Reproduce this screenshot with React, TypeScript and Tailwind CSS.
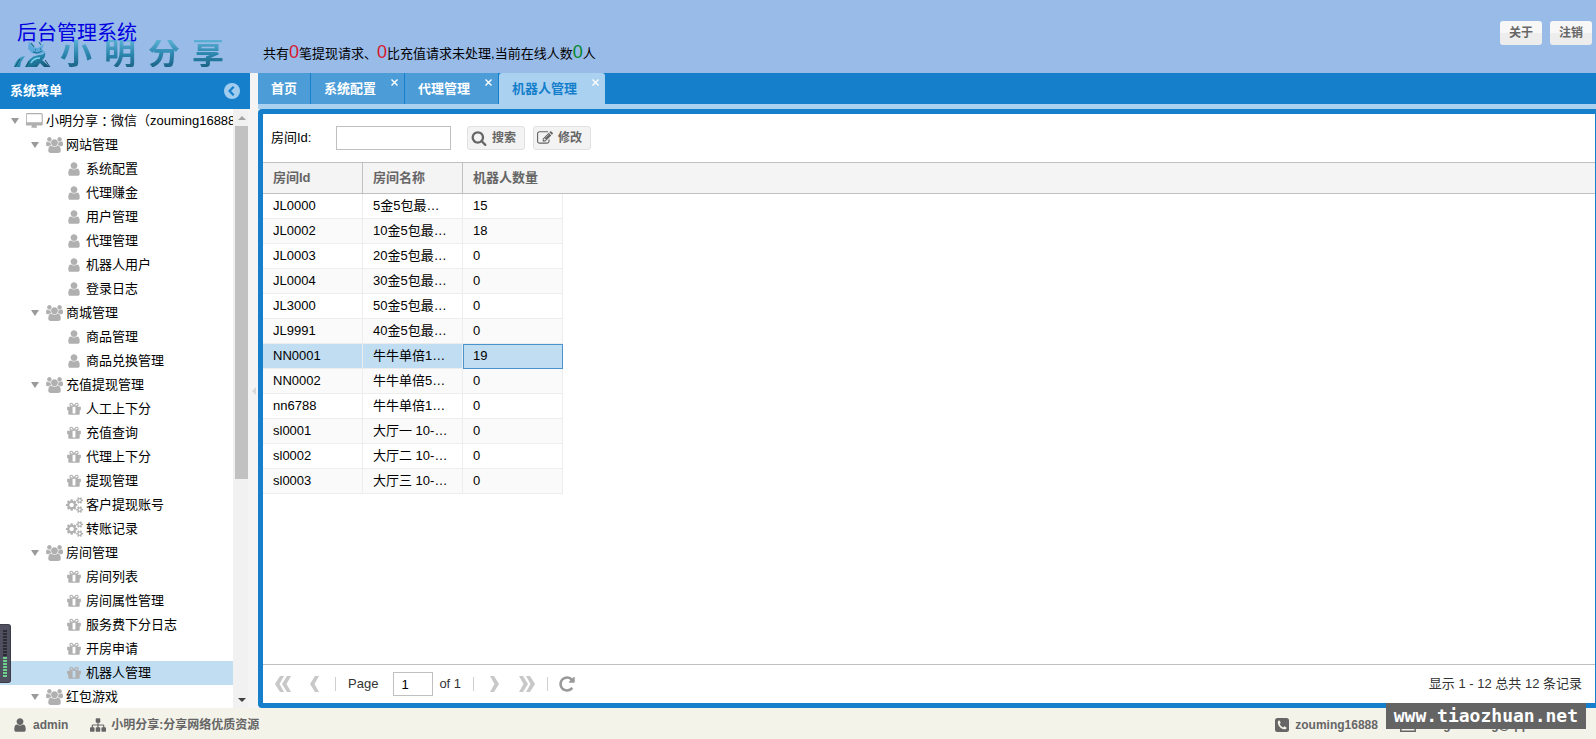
import React from 'react';

const ICONS = {
  desktop: {
    box: '0 0 1856 1792',
    d: 'M1728 992v-832q0-13-9.5-22.5t-22.5-9.5h-1600q-13 0-22.5 9.5t-9.5 22.5v832q0 13 9.5 22.5t22.5 9.5h1600q13 0 22.5-9.5t9.5-22.5zm128-832v1088q0 66-47 113t-113 47h-544q0 37 16 77.5t32 71 16 43.5q0 26-19 45t-45 19h-512q-26 0-45-19t-19-45q0-14 16-44t32-70 16-78h-544q-66 0-113-47t-47-113v-1088q0-66 47-113t113-47h1600q66 0 113 47t47 113z',
  },
  users: {
    box: '0 0 1920 1792',
    d: 'M593 896q-162 5-265 128h-134q-82 0-138-40.5t-56-118.5q0-353 124-353 6 0 43.500 21t97.500 42.500 119 21.500q67 0 133-23-5 37-5 66 0 159 81 256zm1071 637q0 120-73 189.500t-194 69.500h-874q-121 0-194-69.500t-73-189.500q0-53 3.500-103.500t14-109 26.500-108.500 43-97.500 62-81 85.500-53.500 111.500-20q10 0 43 21.500t73 48 107 48 135 21.500 135-21.500 107-48 73-48 43-21.500q61 0 111.500 20t85.500 53.500 62 81 43 97.500 26.500 108.500 14 109 3.500 103.500zm-1024-1277q0 106-75 181t-181 75-181-75-75-181 75-181 181-75 181 75 75 181zm704 384q0 159-112.500 271.500t-271.500 112.500-271.500-112.500-112.500-271.500 112.500-271.500 271.500-112.500 271.500 112.500 112.500 271.500zm576 225q0 78-56 118.500t-138 40.500h-134q-103-123-265-128 90-135 90-294 0-29-5-66 66 23 133 23 59 0 119-21.500t97.500-42.500 43.500-21q124 0 124 353zm-128-609q0 106-75 181t-181 75-181-75-75-181 75-181 181-75 181 75 75 181z',
  },
  user: {
    box: '0 0 1792 1792',
    d: 'M1536 1399q0 109-62.5 187t-150.5 78h-854q-88 0-150.5-78t-62.5-187q0-85 8.5-160.5t31.5-152 58.5-131 94-89 134.5-34.5q131 128 313 128t313-128q76 0 134.5 34.5t94 89 58.5 131 31.5 152 8.5 160.5zm-256-887q0 159-112.5 271.5t-271.5 112.5-271.5-112.5-112.5-271.5 112.5-271.5 271.5-112.5 271.5 112.5 112.5 271.5z',
  },
  gift: {
    box: '0 0 1792 1792',
    d: 'M1056 1356v-716h-320v716q0 25 18 38.5t46 13.5h192q28 0 46-13.5t18-38.5zm-456-844h195l-126-161q-26-31-69-31-40 0-68 28t-28 68 28 68 68 28zm688-96q0-40-28-68t-68-28q-43 0-69 31l-125 161h194q40 0 68-28t28-68zm376 256v320q0 14-9 23t-23 9h-96v416q0 40-28 68t-68 28h-1088q-40 0-68-28t-28-68v-416h-96q-14 0-23-9t-9-23v-320q0-14 9-23t23-9h440q-93 0-158.5-65.5t-65.500-158.500 65.500-158.500 158.500-65.500q107 0 168 77l128 165 128-165q61-77 168-77 93 0 158.500 65.500t65.500 158.500-65.500 158.500-158.500 65.500h440q14 0 23 9t9 23z',
  },
  cogs: {
    box: '0 0 1920 1792',
    d: 'M896 896q0-106-75-181t-181-75-181 75-75 181 75 181 181 75 181-75 75-181zm768 512q0-52-38-90t-90-38-90 38-38 90q0 53 37.500 90.500t90.500 37.500 90.500-37.500 37.500-90.500zm0-1024q0-52-38-90t-90-38-90 38-38 90q0 53 37.500 90.500t90.500 37.500 90.500-37.500 37.500-90.500zm-384 421v185q0 10-7 19.500t-16 10.500l-155 24q-11 35-32 76 34 48 90 115 7 11 7 20 0 12-7 19-23 30-82.500 89.500t-78.500 59.500q-11 0-21-7l-115-90q-37 19-77 31-11 108-23 155-7 24-30 24h-186q-11 0-20-7.500t-10-17.500l-23-153q-34-10-75-31l-118 89q-7 7-20 7-11 0-21-8-144-133-144-160 0-9 7-19 10-14 41-53t47-61q-23-44-35-82l-152-24q-10-1-17-9.500t-7-19.500v-185q0-10 7-19.500t16-10.500l155-24q11-35 32-76-34-48-90-115-7-11-7-20 0-12 7-20 22-30 82-89t79-59q11 0 21 7l115 90q34-18 77-32 11-108 23-154 7-24 30-24h186q11 0 20 7.500t10 17.500l23 153q34 10 75 31l118-89q8-7 20-7 11 0 21 8 144 133 144 160 0 8-7 19-12 16-42 54t-45 60q23 48 34 82l152 23q10 2 17 10.500t7 19.500zm640 533v140q0 16-149 31-12 27-30 52 51 113 51 138 0 4-4 7-122 71-124 71-8 0-46-47t-52-68q-20 2-30 2t-30-2q-14 21-52 68t-46 47q-2 0-124-71-4-3-4-7 0-25 51-138-18-25-30-52-149-15-149-31v-140q0-16 149-31 13-29 30-52-51-113-51-138 0-4 4-7 4-2 35-20t59-34 30-16q8 0 46 46.500t52 67.500q20-2 30-2t30 2q51-71 92-112l6-2q4 0 124 70 4 3 4 7 0 25-51 138 17 23 30 52 149 15 149 31zm0-1024v140q0 16-149 31-12 27-30 52 51 113 51 138 0 4-4 7-122 71-124 71-8 0-46-47t-52-68q-20 2-30 2t-30-2q-14 21-52 68t-46 47q-2 0-124-71-4-3-4-7 0-25 51-138-18-25-30-52-149-15-149-31v-140q0-16 149-31 13-29 30-52-51-113-51-138 0-4 4-7 4-2 35-20t59-34 30-16q8 0 46 46.500t52 67.500q20-2 30-2t30 2q51-71 92-112l6-2q4 0 124 70 4 3 4 7 0 25-51 138 17 23 30 52 149 15 149 31z',
  },
  sitemap: {
    box: '0 0 1792 1792',
    d: 'M1792 1248v320q0 40-28 68t-68 28h-320q-40 0-68-28t-28-68v-320q0-40 28-68t68-28h96v-192h-512v192h96q40 0 68 28t28 68v320q0 40-28 68t-68 28h-320q-40 0-68-28t-28-68v-320q0-40 28-68t68-28h96v-192h-512v192h96q40 0 68 28t28 68v320q0 40-28 68t-68 28h-320q-40 0-68-28t-28-68v-320q0-40 28-68t68-28h96v-192q0-52 38-90t90-38h512v-192h-96q-40 0-68-28t-28-68v-320q0-40 28-68t68-28h320q40 0 68 28t28 68v320q0 40-28 68t-68 28h-96v192h512q52 0 90 38t38 90v192h96q40 0 68 28t28 68z',
  },
  search: {
    box: '0 0 1792 1792',
    d: 'M1216 832q0-185-131.5-316.5t-316.5-131.5-316.5 131.5-131.5 316.5 131.5 316.5 316.5 131.5 316.5-131.5 131.5-316.5zm512 832q0 52-38 90t-90 38q-54 0-90-38l-343-342q-179 124-399 124-143 0-273.5-55.5t-225-150-150-225-55.5-273.5 55.5-273.5 150-225 225-150 273.5-55.5 273.5 55.5 225 150 150 225 55.5 273.5q0 220-124 399l343 343q37 37 37 90z',
  },
  edit: {
    box: '0 0 1792 1792',
    d: 'M888 1184l116-116-152-152-116 116v56h96v96h56zm440-720q-16-16-33 1l-350 350q-17 17-1 33t33-1l350-350q17-17 1-33zm80 594v190q0 119-84.5 203.5t-203.5 84.5h-832q-119 0-203.5-84.5t-84.5-203.5v-832q0-119 84.5-203.5t203.5-84.5h832q63 0 117 25 15 7 18 23 3 17-9 29l-49 49q-14 14-32 8-23-6-45-6h-832q-66 0-113 47t-47 113v832q0 66 47 113t113 47h832q66 0 113-47t47-113v-126q0-13 9-22l64-64q15-15 35-7t20 29zm-96-738l288 288-672 672h-288v-288zm444 132l-92 92-288-288 92-92q28-28 68-28t68 28l152 152q28 28 28 68t-28 68z',
  },
  refresh: {
    box: '0 0 1792 1792',
    d: 'M1664 256v448q0 26-19 45t-45 19h-448q-42 0-59-40-17-39 14-69l138-138q-148-137-349-137-104 0-198.5 40.5t-163.5 109.5-109.5 163.5-40.5 198.5 40.5 198.5 109.5 163.5 163.5 109.5 198.5 40.5q119 0 225-52t179-147q7-10 23-12 15 0 25 9l137 138q9 8 9.5 20.5t-7.5 22.5q-109 132-264 204.5t-327 72.5q-156 0-298-61t-245-164-164-245-61-298 61-298 164-245 245-164 298-61q147 0 284.5 55.5t244.5 156.5l130-129q29-31 70-14 39 17 39 59z',
  },
} as const;

type IconName = keyof typeof ICONS;

function Icon({ name, className }: { name: IconName; className: string }) {
  return (
    <svg viewBox={ICONS[name].box} fill="currentColor" className={className} aria-hidden="true">
      <path d={ICONS[name].d} />
    </svg>
  );
}

type Group = { label: string; items: { icon: IconName; label: string }[] };

const items = (icon: IconName, ...labels: string[]) => labels.map((label) => ({ icon, label }));

const MENU: Group[] = [
  { label: '网站管理', items: items('user', '系统配置', '代理赚金', '用户管理', '代理管理', '机器人用户', '登录日志') },
  { label: '商城管理', items: items('user', '商品管理', '商品兑换管理') },
  {
    label: '充值提现管理',
    items: [
      ...items('gift', '人工上下分', '充值查询', '代理上下分', '提现管理'),
      ...items('cogs', '客户提现账号', '转账记录'),
    ],
  },
  { label: '房间管理', items: items('gift', '房间列表', '房间属性管理', '服务费下分日志', '开房申请', '机器人管理') },
  { label: '红包游戏', items: [] },
];

const SELECTED_ITEM = '机器人管理';

const ROWS: [string, string, number][] = [
  ['JL0000', '5金5包最…', 15],
  ['JL0002', '10金5包最…', 18],
  ['JL0003', '20金5包最…', 0],
  ['JL0004', '30金5包最…', 0],
  ['JL3000', '50金5包最…', 0],
  ['JL9991', '40金5包最…', 0],
  ['NN0001', '牛牛单倍1…', 19],
  ['NN0002', '牛牛单倍5…', 0],
  ['nn6788', '牛牛单倍1…', 0],
  ['sl0001', '大厅一 10-…', 0],
  ['sl0002', '大厅二 10-…', 0],
  ['sl0003', '大厅三 10-…', 0],
];

const SELECTED_ROW = 'NN0001';

function Arrow() {
  return (
    <span className="flex w-5 shrink-0 justify-center">
      <svg viewBox="0 0 8 6" className="h-[6px] w-2" aria-hidden="true">
        <path d="M0 0h8L4 6z" fill="#9a9a9a" />
      </svg>
    </span>
  );
}

const SIZES: Partial<Record<IconName, string>> = {
  desktop: 'h-4 w-[17px]',
  users: 'h-4 w-[17px]',
  cogs: 'h-4 w-[17px]',
};

function TreeIcon({ name }: { name: IconName }) {
  return (
    <span className="mr-[3px] flex w-[18px] shrink-0 justify-center text-[#b0b0b0]">
      <Icon name={name} className={SIZES[name] ?? 'h-4 w-4'} />
    </span>
  );
}

function Sidebar() {
  return (
    <aside className="flex w-[250px] shrink-0 flex-col">
      <div className="flex h-9 shrink-0 items-center justify-between bg-[#157fcc] px-[10px]">
        <h2 className="text-[13px] font-bold leading-5 text-white">系统菜单</h2>
        <button type="button" aria-label="收起菜单">
          <svg viewBox="0 0 16 16" className="block h-4 w-4" aria-hidden="true">
            <circle cx="8" cy="8" r="8" fill="#a1ccee" />
            <path d="M9.700 3.800L5.600 8l4.100 4.200" fill="none" stroke="#157fcc" strokeWidth="2.200" />
          </svg>
        </button>
      </div>
      <div className="flex min-h-0 grow bg-[#f4f4f4] pr-[2px]">
        <nav className="min-w-0 grow overflow-hidden whitespace-nowrap bg-white text-[13px] leading-6 text-black">
          <div className="flex h-6 items-center pl-[5px]">
            <Arrow />
            <TreeIcon name="desktop" />
            小明分享<span className="font-['Noto_Sans_CJK_TC',sans-serif]">：</span>微信（zouming16888
          </div>
          {MENU.map((group) => (
            <div key={group.label}>
              <div className="flex h-6 items-center pl-[25px]">
                <Arrow />
                <TreeIcon name="users" />
                {group.label}
              </div>
              {group.items.map((item) => (
                <a
                  key={item.label}
                  href="#"
                  className={
                    item.label === SELECTED_ITEM
                      ? 'flex h-6 items-center bg-[#c1ddf1] pl-[65px]'
                      : 'flex h-6 items-center pl-[65px]'
                  }
                >
                  <TreeIcon name={item.icon} />
                  {item.label}
                </a>
              ))}
            </div>
          ))}
        </nav>
        <div className="flex w-[15px] shrink-0 flex-col bg-[#f1f1f1] pl-[2px]">
          <span className="flex h-[17px] shrink-0 items-center justify-center">
            <svg viewBox="0 0 8 4" className="h-1 w-2" aria-hidden="true">
              <path d="M0 4h8L4 0z" fill="#a3a3a3" />
            </svg>
          </span>
          <div className="min-h-0 grow">
            <div className="h-[62.5%] bg-[#c1c1c1]" />
          </div>
          <span className="flex h-[17px] shrink-0 items-center justify-center">
            <svg viewBox="0 0 8 4" className="h-1 w-2" aria-hidden="true">
              <path d="M0 0h8L4 4z" fill="#404040" />
            </svg>
          </span>
        </div>
      </div>
    </aside>
  );
}

function Tabs() {
  return (
    <div className="flex h-[31px] shrink-0 bg-[#157fcc] text-[13px] font-bold" role="tablist">
      <button type="button" role="tab" className="mr-px bg-[#4b9cd7] px-[13px] text-white">
        首页
      </button>
      {['系统配置', '代理管理', '机器人管理'].map((label, i) => (
        <div
          key={label}
          className={
            i === 2
              ? 'flex rounded-t-[3px] bg-[#abd1f0] pl-[13px] text-[#157fcc]'
              : 'mr-px flex bg-[#4b9cd7] pl-[13px] text-white'
          }
        >
          <button type="button" role="tab" aria-selected={i === 2}>
            {label}
          </button>
          <button type="button" aria-label={`关闭${label}`} className="flex w-7 justify-end pr-[6px] pt-[6px]">
            <svg viewBox="0 0 7 7" className="h-[7px] w-[7px]" aria-hidden="true">
              <path d="M.5.5l6 6M6.500.5l-6 6" stroke="#fff" strokeWidth="1.400" />
            </svg>
          </button>
        </div>
      ))}
    </div>
  );
}

function ToolButton({ icon, children }: { icon: IconName; children: React.ReactNode }) {
  return (
    <button
      type="button"
      className="flex h-6 items-center gap-[5px] rounded-[3px] border border-[#e1e1e1] bg-[#f3f3f3] pl-[3px] pr-2 text-xs font-bold text-[#666]"
    >
      <Icon name={icon} className="h-4 w-4" />
      {children}
    </button>
  );
}

function Grid() {
  const cell = 'h-[25px] overflow-hidden text-ellipsis whitespace-nowrap border-b border-r border-[#ededed] px-[10px]';
  return (
    <table className="w-full table-fixed border-separate border-spacing-0 text-left text-[13px] leading-6">
      <colgroup>
        <col className="w-[100px]" />
        <col className="w-[100px]" />
        <col className="w-[100px]" />
        <col />
      </colgroup>
      <thead>
        <tr className="bg-[#f4f4f4] text-[#666]">
          <th className="h-8 border-b border-r border-t border-[#c0c0c0] px-[10px]">房间Id</th>
          <th className="h-8 border-b border-r border-t border-[#c0c0c0] px-[10px]">房间名称</th>
          <th className="h-8 border-b border-t border-[#c0c0c0] px-[10px]">机器人数量</th>
          <td className="h-8 border-b border-t border-[#c0c0c0]" />
        </tr>
      </thead>
      <tbody>
        {ROWS.map(([id, name, count], i) => {
          const selected = id === SELECTED_ROW;
          const bg = selected ? 'bg-[#c1ddf1]' : i % 2 ? 'bg-[#fafafa]' : 'bg-white';
          return (
            <tr key={id}>
              <td className={`${cell} ${bg}`}>{id}</td>
              <td className={`${cell} ${bg}`}>{name}</td>
              <td className={`${cell} ${bg} ${selected ? 'outline outline-1 -outline-offset-1 outline-[#4b93cc]' : ''}`}>
                {count}
              </td>
              <td />
            </tr>
          );
        })}
      </tbody>
    </table>
  );
}

function Chevrons({ double, flip, label }: { double?: boolean; flip?: boolean; label: string }) {
  return (
    <button type="button" aria-label={label}>
      <svg
        viewBox={double ? '0 0 16 16' : '0 0 9 16'}
        className={`${double ? 'h-4 w-4' : 'h-4 w-[9px]'} ${flip ? 'rotate-180' : ''}`}
        aria-hidden="true"
      >
        <path d="M5 0h4L4.500 8 9 16H5L0 8z" fill="#c8c8c8" />
        {double && <path d="M12 0h4l-4.500 8 4.500 8h-4L7 8z" fill="#c8c8c8" />}
      </svg>
    </button>
  );
}

function Pager() {
  const sep = 'h-[14px] w-px bg-[#d0d0d0]';
  return (
    <div className="flex h-[39px] shrink-0 items-center border-t border-[#c0c0c0] pl-3 pr-[13px] text-[13px] text-[#333]">
      <div className="flex items-center gap-[19px]">
        <Chevrons double label="第一页" />
        <Chevrons label="上一页" />
      </div>
      <div className={`${sep} ml-4 mr-3`} />
      <label className="flex items-center gap-[15px]">
        Page
        <input
          type="text"
          defaultValue="1"
          className="h-6 w-10 border border-[#c0c0c0] bg-white px-[7px] text-[13px] text-black"
        />
      </label>
      <span className="ml-[6px]">of 1</span>
      <div className={`${sep} mx-3`} />
      <div className="flex items-center gap-5 pl-1">
        <Chevrons flip label="下一页" />
        <Chevrons double flip label="最后一页" />
      </div>
      <div className={`${sep} ml-3 mr-[10px]`} />
      <button type="button" aria-label="刷新" className="text-[#999]">
        <Icon name="refresh" className="h-[18px] w-[18px]" />
      </button>
      <span className="ml-auto">显示 1 - 12 总共 12 条记录</span>
    </div>
  );
}

function Header() {
  const button =
    'h-6 rounded-[3px] bg-linear-to-b from-[#f7f7f7] from-50% to-[#ededed] to-50% px-[9px] text-xs font-bold text-[#666]';
  return (
    <header className="flex h-[73px] shrink-0 bg-[#99bbe8]">
      <div className="relative w-[263px] shrink-0 pl-[17px] pt-[19px]">
        <a href="#" className="relative z-10 block text-xl leading-7 text-[#0000e0]">
          后台管理系统
        </a>
        <div className="absolute left-3 top-[40px] flex h-[27px] items-start">
          <svg viewBox="0 0 40 27" className="h-[27px] w-10 shrink-0" aria-hidden="true">
            <defs>
              <linearGradient id="steel" x1="0" y1="0" x2="1" y2="1">
                <stop offset="0" stopColor="#5fb7d8" />
                <stop offset="0.500" stopColor="#2386ac" />
                <stop offset="1" stopColor="#13506e" />
              </linearGradient>
            </defs>
            <path
              d="M2 27c1-4 3-8 7-10l4-1-4 6-1 5zM13 27l4-7 5-4 1 1-4 10zM17 27c-1-7 4-11 10-12 3 0 5-1 6-3 1 4-1 7-3 8l8 7h-6l-4-4-3 4z"
              fill="url(#steel)"
            />
            <path d="M17 1l3 6 6 1 6-4-2 5 3 3-5 2-8-1-4-4z" fill="#5ba9da" />
            <path d="M19 3l3 4M27 2l2 3M23 10h1M28 9h1M21 12l4 1 5-2" fill="none" stroke="#23789f" strokeWidth="1.300" />
            <path d="M19 23c2-4 5-5 9-5" fill="none" stroke="#7fd0ea" strokeWidth="1.500" />
            <path d="M3 27l5-8M14 27l3-6M33 20l5 7" fill="none" stroke="#164f68" />
          </svg>
          <div className="ml-2 flex gap-3 bg-linear-to-b from-[#5cb0d4] via-[#2c88b0] to-[#1b6487] bg-clip-text text-[32px] font-bold leading-[27px] text-transparent">
            <span>小</span>
            <span>明</span>
            <span>分</span>
            <span>享</span>
          </div>
        </div>
      </div>
      <p className="flex h-[66px] items-end text-[13px] leading-6 text-black">
        <span>
          共有<span className="text-lg leading-6 text-[#d8172c]">0</span>笔提现请求、
          <span className="text-lg leading-6 text-[#d8172c]">0</span>比充值请求未处理,当前在线人数
          <span className="text-lg leading-6 text-[#07872c]">0</span>人
        </span>
      </p>
      <div className="ml-auto flex gap-2 pr-1 pt-[21px]">
        <button type="button" className={button}>
          关于
        </button>
        <button type="button" className={button}>
          注销
        </button>
      </div>
    </header>
  );
}

function Footer() {
  return (
    <footer className="relative flex h-[31px] shrink-0 items-center bg-[#f4f3ea] px-3 pt-[3px] text-xs font-bold text-[#666]">
      <span className="flex items-center gap-[5px]">
        <Icon name="user" className="h-4 w-4" />
        admin
      </span>
      <span className="ml-[22px] flex items-center gap-[5px]">
        <Icon name="sitemap" className="h-4 w-4" />
        小明分享:分享网络优质资源
      </span>
      <span className="ml-auto flex items-center gap-[6px]">
        <svg viewBox="0 0 14 14" className="h-[14px] w-[14px]" aria-hidden="true">
          <rect width="14" height="14" rx="2.500" fill="#666" />
          <path
            d="M4.200 2.300c-1 .4-1.600 1.200-1.400 2.600.5 3 3 5.800 6.200 6.400 1.400.2 2.300-.5 2.700-1.600l-2.300-1.400-1.300 1.200C6.600 8.800 5.300 7.500 4.700 6.100L5.800 4.800z"
            fill="#f4f3ea"
          />
        </svg>
        zouming16888
      </span>
      <span className="ml-[22px] flex items-center gap-[6px] pr-[31px]">
        <svg viewBox="0 0 16 14" className="h-[14px] w-4" aria-hidden="true">
          <path d="M.8.8h14.400v12.400H.8zM1 4l7 5 7-5" fill="none" stroke="#666" strokeWidth="1.500" />
        </svg>
        mingxinwang@qq.com
      </span>
      <div className="absolute -top-[5px] right-[10px] h-[26px] bg-[#646464] px-2 font-['DejaVu_Sans_Mono',monospace] text-lg leading-[26px] text-white">
        www.tiaozhuan.net
      </div>
    </footer>
  );
}

function VolumeMeter() {
  return (
    <div className="absolute bottom-14 left-0 flex h-[59px] w-[11px] flex-col justify-center gap-px rounded-r-[3px] border border-l-0 border-[#3b3c48] bg-[#4e4f5f] pl-[3px]">
      {Array.from({ length: 16 }, (_, i) => (
        <span key={i} className={i < 9 ? 'h-[2px] w-1 bg-[#2b2c36]' : 'h-[2px] w-1 bg-[#6fd08c]'} />
      ))}
    </div>
  );
}

export default function App() {
  return (
    <div className="relative flex h-screen flex-col overflow-hidden bg-white font-['Liberation_Sans','Noto_Sans_CJK_SC',sans-serif]">
      <Header />
      <div className="flex min-h-0 grow">
        <Sidebar />
        <div className="flex w-2 shrink-0 items-center justify-center bg-[#f4f4f4]">
          <svg viewBox="0 0 4 8" className="h-2 w-1" aria-hidden="true">
            <path d="M4 0v8L0 4z" fill="#d8d8d8" />
          </svg>
        </div>
        <main className="flex min-w-0 grow flex-col bg-[#f4f4f4]">
          <Tabs />
          <div className="h-[5px] shrink-0 bg-[#abd1f0]" />
          <section className="flex min-h-0 grow flex-col rounded-l-[4px] border-y-[5px] border-l-[5px] border-r border-[#157fcc] bg-white">
            <form className="flex h-12 shrink-0 items-center pl-2 text-[13px]">
              <label htmlFor="room" className="w-[65px]">
                房间Id:
              </label>
              <input id="room" type="text" className="mr-4 h-6 w-[115px] border border-[#c0c0c0] bg-white px-2" />
              <div className="flex gap-2">
                <ToolButton icon="search">搜索</ToolButton>
                <ToolButton icon="edit">修改</ToolButton>
              </div>
            </form>
            <div className="min-h-0 grow overflow-hidden">
              <Grid />
            </div>
            <Pager />
          </section>
        </main>
      </div>
      <Footer />
      <VolumeMeter />
    </div>
  );
}
